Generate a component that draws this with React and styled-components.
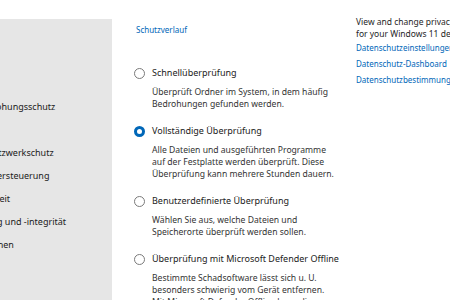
import styled, { createGlobalStyle } from "styled-components";

const GlobalStyle = createGlobalStyle`
  html, body {
    margin: 0;
    padding: 0;
    background: #ffffff;
    overflow: hidden;
  }
  body {
    font-family: "Noto Sans", "Open Sans", sans-serif;
    color: #1b1b1b;
  }
`;

const navItems = [
  "Viren- & Bedrohungsschutz",
  "Kontoschutz",
  "Firewall- & Netzwerkschutz",
  "App- & Browsersteuerung",
  "Gerätesicherheit",
  "Geräteleistung und -integrität",
  "Familienoptionen",
];

const scanOptions = [
  {
    label: "Schnellüberprüfung",
    text: "Überprüft Ordner im System, in dem häufig Bedrohungen gefunden werden.",
  },
  {
    label: "Vollständige Überprüfung",
    text: "Alle Dateien und ausgeführten Programme auf der Festplatte werden überprüft. Diese Überprüfung kann mehrere Stunden dauern.",
    checked: true,
  },
  {
    label: "Benutzerdefinierte Überprüfung",
    text: "Wählen Sie aus, welche Dateien und Speicherorte überprüft werden sollen.",
  },
  {
    label: "Überprüfung mit Microsoft Defender Offline",
    text: "Bestimmte Schadsoftware lässt sich u. U. besonders schwierig vom Gerät entfernen. Mit Microsoft Defender Offline kann diese Software gefunden und entfernt werden.",
  },
];

const privacyLinks = [
  "Datenschutzeinstellungen",
  "Datenschutz-Dashboard",
  "Datenschutzbestimmungen",
];

export default function App() {
  return (
    <>
      <GlobalStyle />
      <Window>
        <Sidebar>
          <NavList>
            {navItems.map((item) => (
              <NavItem key={item}>{item}</NavItem>
            ))}
          </NavList>
        </Sidebar>
        <Main>
          <Link>Schutzverlauf</Link>
          <Options>
            {scanOptions.map((opt) => (
              <Option key={opt.label}>
                <OptionRow>
                  <Radio $checked={opt.checked} />
                  <Label>{opt.label}</Label>
                </OptionRow>
                <Description>{opt.text}</Description>
              </Option>
            ))}
          </Options>
        </Main>
        <Aside>
          <AsideText>
            View and change privacy settings
            <br />
            for your Windows 11 device.
          </AsideText>
          <LinkList>
            {privacyLinks.map((l) => (
              <Link key={l}>{l}</Link>
            ))}
          </LinkList>
        </Aside>
      </Window>
    </>
  );
}

const Window = styled.div`
  display: flex;
  width: 450px;
  height: 300px;
  overflow: hidden;
`;

const Sidebar = styled.nav`
  flex: 0 0 112px;
  margin-top: 19px;
  background: #e6e6e6;
  overflow: hidden;
`;

const NavList = styled.div`
  display: flex;
  flex-direction: column;
  margin-left: -60px;
  padding-top: 76px;
  white-space: nowrap;
`;

const NavItem = styled.div`
  height: 23px;
  line-height: 23px;
  font-size: 9px;
  color: #1b1b1b;
`;

const Main = styled.main`
  flex: 0 0 220px;
  padding: 24px 0 0 24px;
`;

const Link = styled.div`
  font-size: 8px;
  line-height: 12px;
  color: #0067b8;
  white-space: nowrap;
`;

const Options = styled.div`
  display: flex;
  flex-direction: column;
  gap: 15px;
  margin-top: 31px;
`;

const Option = styled.div`
  display: flex;
  flex-direction: column;
  gap: 7px;
`;

const OptionRow = styled.div`
  display: flex;
  align-items: center;
  gap: 7px;
  margin-left: -2px;
`;

const Radio = styled.span`
  box-sizing: border-box;
  width: 11px;
  height: 11px;
  border-radius: 50%;
  background: #ffffff;
  border: ${(p) => (p.$checked ? "3px solid #0067b8" : "1px solid #7a7a7a")};
`;

const Label = styled.span`
  font-size: 9px;
  line-height: 12px;
  white-space: nowrap;
`;

const Description = styled.div`
  padding-left: 16px;
  width: 186px;
  font-size: 8.6px;
  line-height: 12px;
  color: #333333;
`;

const Aside = styled.aside`
  flex: 0 0 auto;
  width: 170px;
  padding-top: 16px;
  white-space: nowrap;
`;

const AsideText = styled.div`
  font-size: 8.5px;
  line-height: 12px;
  color: #262626;
`;

const LinkList = styled.div`
  display: flex;
  flex-direction: column;
  gap: 4px;
  margin-top: 2px;
`;
